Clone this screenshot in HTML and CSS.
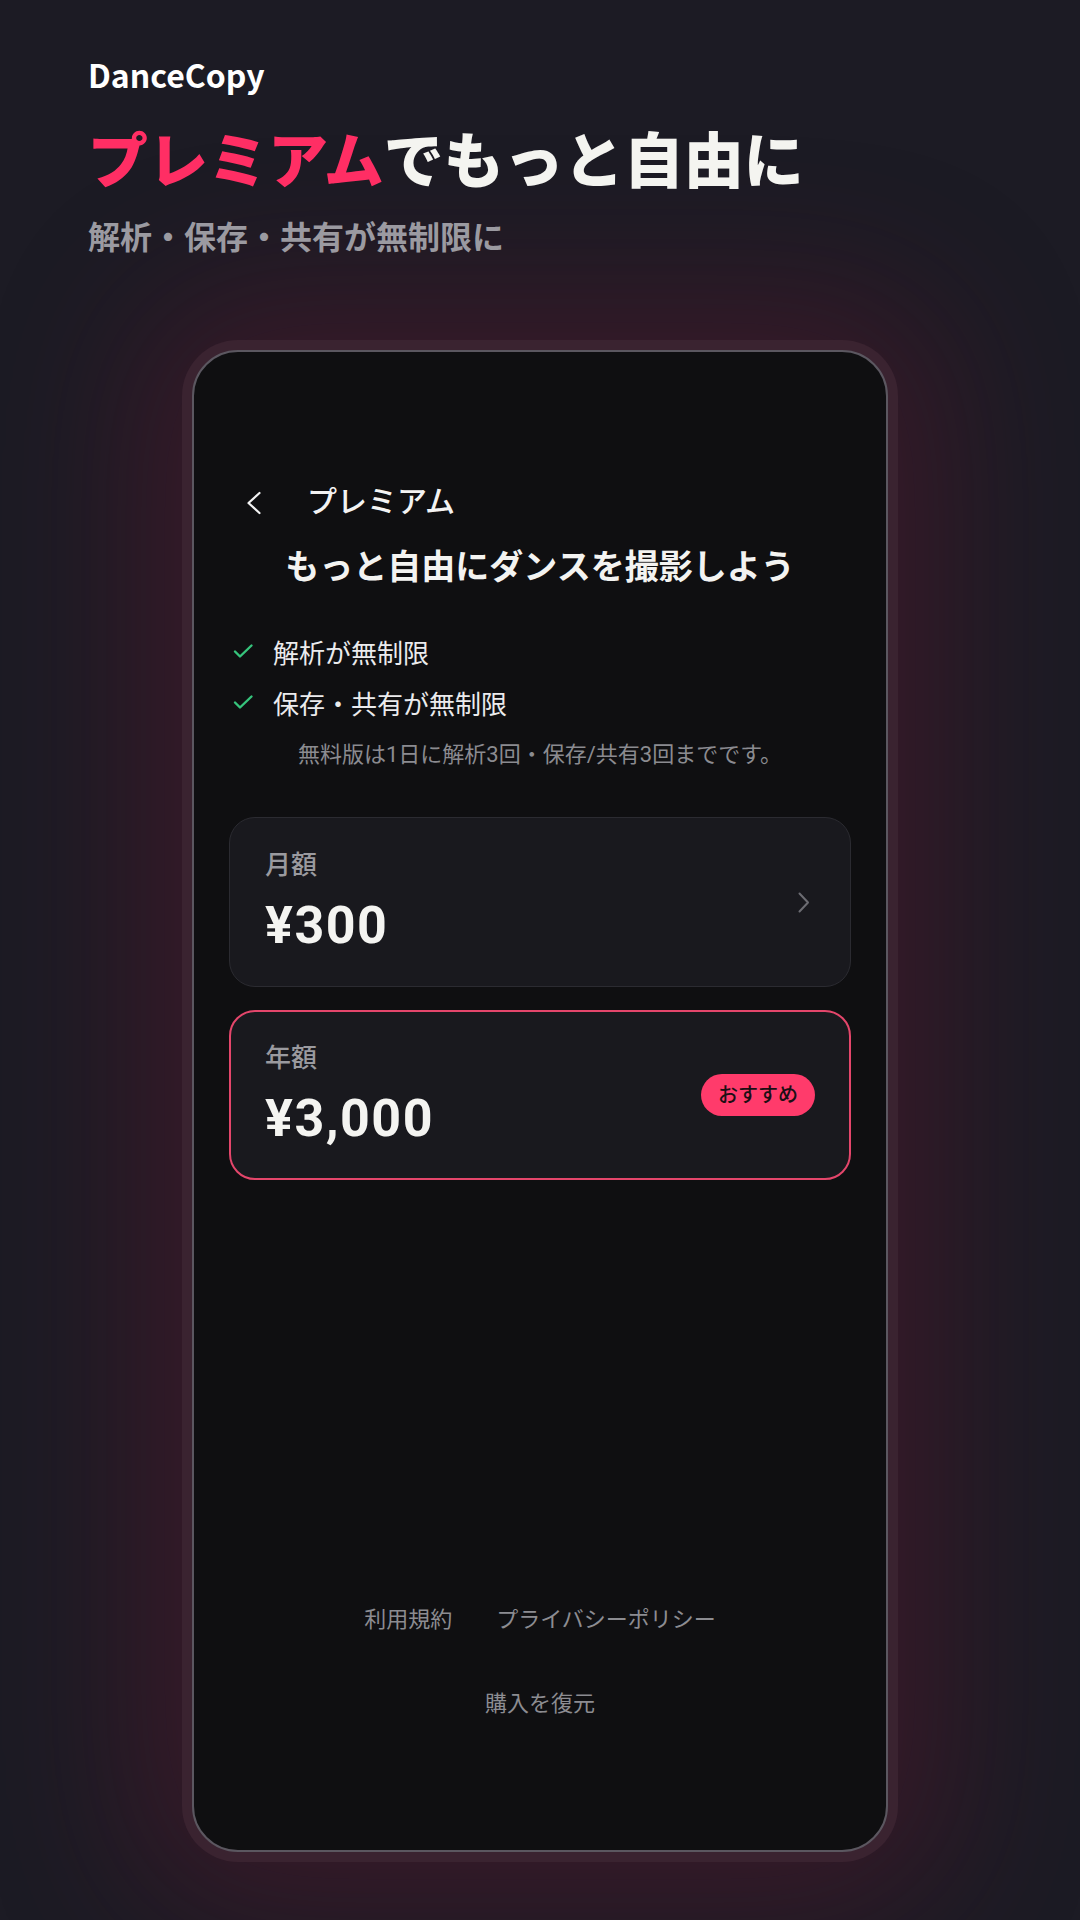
FILE: index.html
```html
<!DOCTYPE html>
<html lang="ja">
<head>
    <meta charset="UTF-8">
    <meta name="viewport" content="width=device-width, initial-scale=1.0">
    <title>DanceCopy Premium</title>
    <link rel="stylesheet" href="styles.css">
</head>
<body>
    <main class="promo">
        <!-- Store headline -->
        <header class="promo-head">
            <p class="brand">DanceCopy</p>
            <h1 class="headline"><span class="accent">プレミアム</span>でもっと自由に</h1>
            <p class="tagline">解析・保存・共有が無制限に</p>
        </header>

        <!-- Phone mockup -->
        <div class="device">
            <div class="screen">
                <div class="topbar">
                    <button class="back" aria-label="戻る">
                        <svg width="28" height="28" viewBox="0 0 28 28"><path d="M20.5 5 L9.5 15 L20.5 25" fill="none" stroke="#f2f2f2" stroke-width="2.2" stroke-linecap="round" stroke-linejoin="round"/></svg>
                    </button>
                    <h2 class="topbar-title">プレミアム</h2>
                </div>

                <h3 class="lead">もっと自由にダンスを撮影しよう</h3>

                <ul class="perks">
                    <li>
                        <svg width="24" height="24" viewBox="0 0 24 24"><path d="M4 12.5 L9 17.5 L20.5 6.5" fill="none" stroke="#36c47c" stroke-width="2.4" stroke-linecap="round" stroke-linejoin="round"/></svg>
                        解析が無制限
                    </li>
                    <li>
                        <svg width="24" height="24" viewBox="0 0 24 24"><path d="M4 12.5 L9 17.5 L20.5 6.5" fill="none" stroke="#36c47c" stroke-width="2.4" stroke-linecap="round" stroke-linejoin="round"/></svg>
                        保存・共有が無制限
                    </li>
                </ul>

                <p class="note">無料版は1日に解析3回・保存/共有3回までです。</p>

                <div class="plans">
                    <a class="plan" href="#">
                        <div class="plan-info">
                            <span class="plan-label">月額</span>
                            <span class="plan-price">¥300</span>
                        </div>
                        <svg width="24" height="24" viewBox="0 0 24 24"><path d="M8.5 3.5 L17 12.5 L8.5 21.5" fill="none" stroke="#6c6c72" stroke-width="2" stroke-linecap="round" stroke-linejoin="round"/></svg>
                    </a>
                    <a class="plan plan-best" href="#">
                        <div class="plan-info">
                            <span class="plan-label">年額</span>
                            <span class="plan-price">¥3,000</span>
                        </div>
                        <span class="badge">おすすめ</span>
                    </a>
                </div>

                <div class="legal">
                    <div class="legal-links">
                        <a href="#">利用規約</a>
                        <a href="#">プライバシーポリシー</a>
                    </div>
                    <a class="restore" href="#">購入を復元</a>
                </div>
            </div>
        </div>
    </main>
</body>
</html>
```

FILE: styles.css
```css
* {
    box-sizing: border-box;
}

html, body {
    margin: 0;
}

body {
    width: 1080px;
    height: 1920px;
    overflow: hidden;
    background-color: #1c1b24;
    font-family: "Noto Sans CJK JP", sans-serif;
    color: #f3f3f1;
}

.promo {
    padding-top: 58px;
}

/* Headline above the phone */
.promo-head {
    padding: 0 88px;
}

.brand {
    margin: 0;
    font-size: 32px;
    font-weight: 700;
    line-height: 1;
    color: #ffffff;
}

.headline {
    margin: 37px 0 0;
    font-size: 60px;
    font-weight: 900;
    line-height: 1;
    color: #f4f4f0;
}

.accent {
    color: #ff2e64;
}

.tagline {
    margin: 32px 0 0;
    font-size: 32px;
    font-weight: 700;
    line-height: 1;
    color: #9b9aa1;
}

/* Phone frame */
.device {
    width: 716px;
    margin: 89px auto 0;
    padding: 10px;
    border-radius: 56px;
    background-color: #3a2330;
    box-shadow: 0 0 150px 40px rgba(110, 22, 50, 0.36);
}

.screen {
    display: flex;
    flex-direction: column;
    height: 1502px;
    padding: 126px 35px 130px;
    border: 2px solid #5b5760;
    border-radius: 46px;
    background-color: #0f0f11;
    font-family: Roboto, "Noto Sans CJK JP", sans-serif;
}

.topbar {
    display: flex;
    align-items: center;
    height: 48px;
    flex-shrink: 0;
}

.back {
    display: flex;
    align-items: center;
    justify-content: center;
    width: 48px;
    height: 48px;
    padding: 0;
    border: none;
    background: none;
}

.topbar-title {
    margin: 0 0 0 30px;
    font-size: 30px;
    font-weight: 500;
    line-height: 1.2;
    color: #f3f3f3;
}

.lead {
    margin: 19px 0 0;
    font-size: 34px;
    font-weight: 700;
    line-height: 44px;
    text-align: center;
    color: #f3f3f1;
}

/* Feature list */
.perks {
    list-style: none;
    margin: 42px 0 0;
    padding: 0 0 0 2px;
}

.perks li {
    display: flex;
    align-items: center;
    gap: 18px;
    height: 40px;
    font-size: 26px;
    color: #ebebed;
}

.perks li + li {
    margin-top: 11px;
}

.note {
    margin: 17px 0 0;
    font-size: 22px;
    line-height: 32px;
    text-align: center;
    color: #8b8b90;
}

/* Plan cards */
.plans {
    display: flex;
    flex-direction: column;
    gap: 23px;
    margin-top: 46px;
}

.plan {
    display: flex;
    align-items: center;
    justify-content: space-between;
    padding: 30px 35px;
    border: 1px solid #2b2b31;
    border-radius: 26px;
    background-color: #19191e;
    color: inherit;
    text-decoration: none;
}

.plan-best {
    padding: 29px 34px;
    border: 2px solid #e4466b;
}

.plan-info {
    display: flex;
    flex-direction: column;
    gap: 14px;
}

.plan-label {
    font-size: 26px;
    font-weight: 500;
    line-height: 34px;
    color: #9a9a9f;
}

.plan-price {
    font-size: 52px;
    font-weight: 700;
    line-height: 60px;
    letter-spacing: 1.5px;
    color: #f4f4f1;
}

.badge {
    height: 42px;
    padding: 0 17px;
    border-radius: 21px;
    background-color: #ff3b6b;
    font-size: 20px;
    font-weight: 500;
    line-height: 42px;
    color: #1b0f14;
}

/* Footer links */
.legal {
    display: flex;
    flex-direction: column;
    align-items: center;
    gap: 52px;
    margin-top: auto;
}

.legal-links {
    display: flex;
    gap: 44px;
}

.legal a {
    font-size: 22px;
    line-height: 32px;
    color: #8c8c91;
    text-decoration: none;
}
```
